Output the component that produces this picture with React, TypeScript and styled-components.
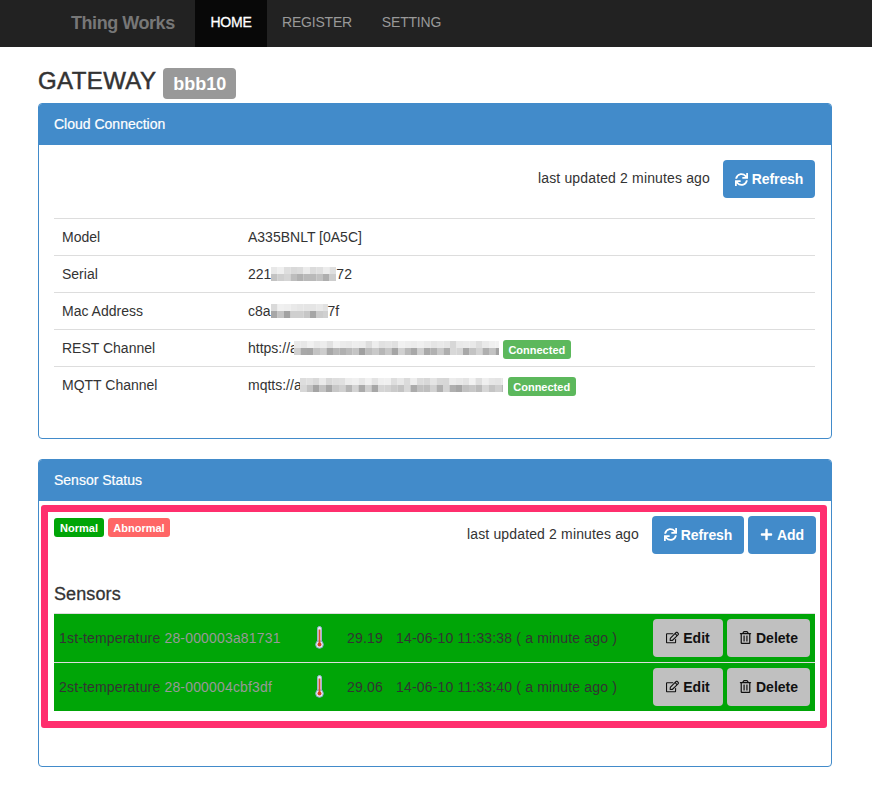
import React from "react";
import styled, { createGlobalStyle } from "styled-components";
import { FaSync, FaPlus, FaRegEdit, FaRegTrashAlt } from "react-icons/fa";

const Global = createGlobalStyle`
  html, body { margin: 0; padding: 0; background: #fff; }
  body { font-family: "Liberation Sans", Arial, sans-serif; font-size: 14px; line-height: 20px; color: #333; }
  * { box-sizing: border-box; }
`;

const Nav = styled.nav`
  height: 47px; background: #222; display: flex; padding-left: 71px; align-items: stretch;
`;
const Brand = styled.div`
  font-size: 18px; font-weight: 700; color: #777; line-height: 47px; width: 124px; letter-spacing: -0.45px;
`;
const NavItem = styled.div<{ $active?: boolean; $w: number }>`
  width: ${(p) => p.$w}px; text-align: center; line-height: 44px; font-size: 14px; letter-spacing: -0.2px;
  color: ${(p) => (p.$active ? "#fff" : "#999")};
  background: ${(p) => (p.$active ? "#080808" : "transparent")};
  -webkit-text-stroke: ${(p) => (p.$active ? "0.3px #fff" : "0")};
`;

const Page = styled.main`
  padding: 0 40px 38px 38px;
`;
const Title = styled.div`
  display: flex; align-items: flex-start; height: 56px; padding-top: 21px;
`;
const TitleText = styled.h3`
  margin: 0; font-size: 24px; line-height: 26px; font-weight: 400; color: #333; letter-spacing: 0.4px;
  -webkit-text-stroke: 0.5px #333;
`;
const TitleBadge = styled.span`
  margin-left: 7px; height: 31px; width: 73px; background: #999; color: #fff; border-radius: 4px;
  font-size: 18px; font-weight: 700; line-height: 32px; text-align: center;
`;

const Panel = styled.section<{ $gap?: number }>`
  border: 1px solid #428bca; border-radius: 4px; margin-bottom: ${(p) => p.$gap ?? 0}px; overflow: hidden;
`;
const PanelHead = styled.header`
  height: 41px; background: #428bca; color: #fff; padding: 0 15px; line-height: 40px; font-size: 14px;
  -webkit-text-stroke: 0.2px #fff;
`;
const PanelBody = styled.div`
  padding: 15px 16px 34px 15px;
`;
const Toolbar = styled.div`
  display: flex; justify-content: flex-end; align-items: center; gap: 13px; height: 38px;
`;
const Updated = styled.span`
  font-size: 14px; color: #333; letter-spacing: 0.15px; padding-bottom: 2px;
`;
const Btn = styled.button<{ $w: number }>`
  width: ${(p) => p.$w}px; height: 38px; border: 0; border-radius: 4px; background: #428bca; color: #fff; letter-spacing: -0.1px;
  font: 700 14px "Liberation Sans", Arial, sans-serif; display: inline-flex; align-items: center; justify-content: center; gap: 4px; padding: 0;
  svg { width: 13px; height: 13px; }
`;
const InfoTable = styled.table`
  width: 100%; border-collapse: collapse; margin-top: 20px;
`;
const InfoRow = styled.tr`
  height: 37px; border-top: 1px solid #ddd;
`;
const InfoKey = styled.td`
  width: 186px; padding: 0 8px; font-size: 14px; color: #333;
`;
const InfoVal = styled.td`
  padding: 0 8px; font-size: 14px; color: #333;
`;
const ValueFlow = styled.div`
  display: flex; align-items: center; height: 36px;
`;
const ConnBadge = styled.span<{ $ml: number }>`
  margin: 2px 0 0 ${(p) => p.$ml}px; width: 68px; height: 19px; border-radius: 3px; background: #5cb85c; color: #fff;
  font-size: 11px; font-weight: 700; line-height: 20px; text-align: center;
`;
const MosaicSvg = styled.svg<{ $ml: number }>`
  display: block; flex: none; margin-left: ${(p) => p.$ml}px;
`;

const Highlight = styled.div`
  margin: 4px 4px 38px 2px; height: 223px; border: 7px solid #ff2f6e; border-radius: 3px; padding: 4px 4px 0 6px;
`;
const TopRow = styled.div`
  display: flex; justify-content: space-between; align-items: flex-start; height: 38px;
`;
const LegendGroup = styled.div`
  display: flex; gap: 4px; padding-top: 2px;
`;
const Legend = styled.span<{ $bg: string; $w: number }>`
  width: ${(p) => p.$w}px; height: 19px; background: ${(p) => p.$bg}; color: #fff; border-radius: 3px;
  font-size: 11px; font-weight: 700; line-height: 20px; text-align: center;
`;
const RightTools = styled.div`
  display: flex; align-items: center; gap: 4px;
`;
const UpdatedSm = styled(Updated)`
  margin-right: 9px;
`;
const SensorsTitle = styled.h4`
  margin: 30px 0 9px; font-size: 18px; line-height: 20px; font-weight: 400; color: #333; letter-spacing: 0.1px;
  -webkit-text-stroke: 0.3px #333;
`;
const SensorList = styled.div`
  margin-right: 1px; background: #00a507;
`;
const SensorRow = styled.div`
  height: 49px; border-top: 1px solid #ddd; display: grid; letter-spacing: 0.17px;
  grid-template-columns: 240px 48px 49px 1fr auto; align-items: center; padding: 0 5px; color: #333; font-size: 14px;
`;
const SensorName = styled.div`
  white-space: nowrap;
`;
const SensorId = styled.span`
  color: #999;
`;
const ThermoCell = styled.div`
  display: flex; justify-content: center; padding-right: 8px;
`;
const Actions = styled.div`
  display: flex; gap: 4px;
`;
const GrayBtn = styled.button<{ $w: number }>`
  width: ${(p) => p.$w}px; height: 38px; border: 0; border-radius: 4px; background: #c0c0c0; color: #111;
  font: 700 14px "Liberation Sans", Arial, sans-serif; display: inline-flex; align-items: center; justify-content: center; gap: 4px; padding: 0;
  svg { width: 13px; height: 13px; }
`;

function Mosaic({ w, seed, ml = 0 }: { w: number; seed: number; ml?: number }) {
  const cols = Math.ceil(w / 6.5);
  const rects: React.ReactNode[] = [];
  let s = seed;
  for (let r = 0; r < 2; r++) {
    for (let c = 0; c < cols; c++) {
      s = (s * 9301 + 49297) % 233280;
      const t = s / 233280;
      const base = r === 0 ? 214 + t * 28 : 160 + t * 56;
      const v = Math.round(base);
      rects.push(<rect key={`${r}-${c}`} x={c * 6.5} y={r * 7} width={6.6} height={7.1} fill={`rgb(${v},${v},${v})`} />);
    }
  }
  return (
    <MosaicSvg $ml={ml} width={w} height={14} viewBox={`0 0 ${w} 14`}>
      {rects}
    </MosaicSvg>
  );
}

function Thermometer() {
  return (
    <svg width="9" height="23" viewBox="0 0 9 23">
      <rect x="2.5" y="0.5" width="4" height="17" rx="2" fill="#e4ecf6" stroke="#9db2d2" />
      <circle cx="4.5" cy="18.5" r="3.8" fill="#e4eef8" stroke="#8aa5cc" />
      <rect x="3.6" y="3.5" width="1.8" height="14" fill="#d8502f" />
      <circle cx="4.5" cy="18.5" r="2" fill="#d8401f" />
    </svg>
  );
}

const sensors = [
  { name: "1st-temperature", id: "28-000003a81731", val: "29.19", time: "14-06-10 11:33:38 ( a minute ago )" },
  { name: "2st-temperature", id: "28-000004cbf3df", val: "29.06", time: "14-06-10 11:33:40 ( a minute ago )" },
];

export default function App() {
  return (
    <>
      <Global />
      <Nav>
        <Brand>Thing Works</Brand>
        <NavItem $active $w={72}>HOME</NavItem>
        <NavItem $w={100}>REGISTER</NavItem>
        <NavItem $w={89}>SETTING</NavItem>
      </Nav>
      <Page>
        <Title>
          <TitleText>GATEWAY</TitleText>
          <TitleBadge>bbb10</TitleBadge>
        </Title>
        <Panel $gap={20}>
          <PanelHead>Cloud Connection</PanelHead>
          <PanelBody>
            <Toolbar>
              <Updated>last updated 2 minutes ago</Updated>
              <Btn $w={92}><FaSync />Refresh</Btn>
            </Toolbar>
            <InfoTable>
              <tbody>
                <InfoRow><InfoKey>Model</InfoKey><InfoVal>A335BNLT [0A5C]</InfoVal></InfoRow>
                <InfoRow><InfoKey>Serial</InfoKey><InfoVal><ValueFlow>221<Mosaic w={65} seed={11} />72</ValueFlow></InfoVal></InfoRow>
                <InfoRow><InfoKey>Mac Address</InfoKey><InfoVal><ValueFlow>c8a<Mosaic w={57} seed={23} />7f</ValueFlow></InfoVal></InfoRow>
                <InfoRow><InfoKey>REST Channel</InfoKey><InfoVal><ValueFlow>https://a<Mosaic w={205} seed={37} ml={-4} /><ConnBadge $ml={4}>Connected</ConnBadge></ValueFlow></InfoVal></InfoRow>
                <InfoRow><InfoKey>MQTT Channel</InfoKey><InfoVal><ValueFlow>mqtts://a<Mosaic w={203} seed={51} ml={-2} /><ConnBadge $ml={5}>Connected</ConnBadge></ValueFlow></InfoVal></InfoRow>
              </tbody>
            </InfoTable>
          </PanelBody>
        </Panel>
        <Panel>
          <PanelHead>Sensor Status</PanelHead>
          <Highlight>
            <TopRow>
              <LegendGroup>
                <Legend $bg="#00a507" $w={50}>Normal</Legend>
                <Legend $bg="#ff6666" $w={62}>Abnormal</Legend>
              </LegendGroup>
              <RightTools>
                <UpdatedSm>last updated 2 minutes ago</UpdatedSm>
                <Btn $w={92}><FaSync />Refresh</Btn>
                <Btn $w={68}><FaPlus />Add</Btn>
              </RightTools>
            </TopRow>
            <SensorsTitle>Sensors</SensorsTitle>
            <SensorList>
              {sensors.map((s) => (
                <SensorRow key={s.id}>
                  <SensorName>{s.name} <SensorId>{s.id}</SensorId></SensorName>
                  <ThermoCell><Thermometer /></ThermoCell>
                  <span>{s.val}</span>
                  <span>{s.time}</span>
                  <Actions>
                    <GrayBtn $w={70}><FaRegEdit />Edit</GrayBtn>
                    <GrayBtn $w={83}><FaRegTrashAlt />Delete</GrayBtn>
                  </Actions>
                </SensorRow>
              ))}
            </SensorList>
          </Highlight>
        </Panel>
      </Page>
    </>
  );
}
